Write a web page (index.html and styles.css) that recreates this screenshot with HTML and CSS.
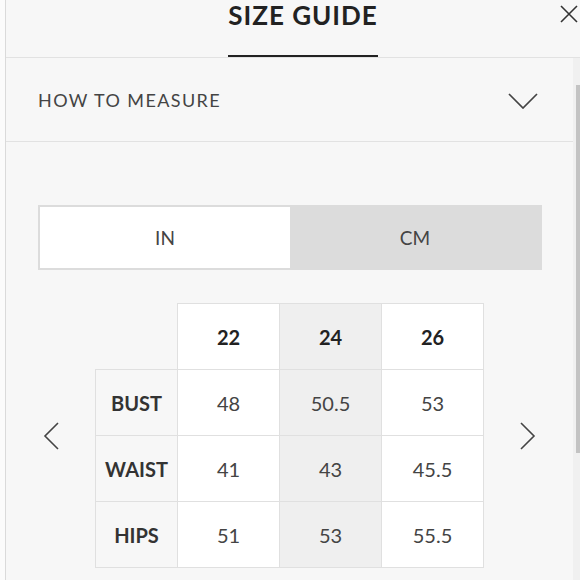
FILE: index.html
```html
<!DOCTYPE html>
<html>
<head>
<meta charset="utf-8">
<link rel="stylesheet" href="styles.css">
</head>
<body>
<div class="page">
  <div class="panel">
    <header class="head">
      <div></div>
      <h1 class="title">SIZE GUIDE</h1>
      <button class="close" aria-label="Close">
        <svg width="18" height="18" viewBox="0 0 18 18"><path d="M1 1 L17 17 M17 1 L1 17" stroke="#333" stroke-width="1.6" fill="none"/></svg>
      </button>
    </header>
    <div class="scroll">
      <div class="content">
        <div class="measure">
          <span>HOW TO MEASURE</span>
          <svg width="30" height="16" viewBox="0 0 30 16"><path d="M1 1 L15 15 L29 1" stroke="#444" stroke-width="1.7" fill="none"/></svg>
        </div>
        <div class="toggle">
          <div class="opt active">IN</div>
          <div class="opt">CM</div>
        </div>
        <div class="chart">
          <svg class="arrow" width="16" height="28" viewBox="0 0 16 28"><path d="M15 1 L2 14 L15 27" stroke="#444" stroke-width="1.6" fill="none"/></svg>
          <table class="sizes">
            <tr class="hrow"><th class="blank"></th><th>22</th><th class="alt">24</th><th>26</th></tr>
            <tr><th class="lab">BUST</th><td>48</td><td class="alt">50.5</td><td>53</td></tr>
            <tr><th class="lab">WAIST</th><td>41</td><td class="alt">43</td><td>45.5</td></tr>
            <tr><th class="lab">HIPS</th><td>51</td><td class="alt">53</td><td>55.5</td></tr>
          </table>
          <svg class="arrow" width="16" height="28" viewBox="0 0 16 28"><path d="M1 1 L14 14 L1 27" stroke="#444" stroke-width="1.6" fill="none"/></svg>
        </div>
      </div>
      <div class="bar"><div class="thumb"></div></div>
    </div>
  </div>
</div>
</body>
</html>
```
FILE: styles.css
```css
html, body {
  margin: 0;
  padding: 0;
  height: 100%;
  overflow: hidden;
}
body {
  background: #fbfbfb;
  font-family: Lato, "Open Sans", sans-serif;
}
.page {
  display: flex;
  height: 580px;
  padding-left: 5px;
}
.panel {
  flex: 1;
  display: flex;
  flex-direction: column;
  background: #f7f7f7;
  border-left: 1px solid #dadada;
}
.head {
  display: grid;
  grid-template-columns: 1fr auto 1fr;
  height: 57px;
  padding-left: 20px;
  border-bottom: 1px solid #e2e2e2;
}
.title {
  margin: 0;
  font-size: 26px;
  font-weight: 700;
  letter-spacing: 1px;
  color: #222;
  line-height: 30px;
  padding-bottom: 25px;
  border-bottom: 2px solid #222;
}
.close {
  justify-self: end;
  align-self: start;
  margin: 5px 2px 0 0;
  padding: 0;
  border: 0;
  background: none;
  width: 18px;
  height: 18px;
}
.close svg { display: block; }
.scroll {
  flex: 1;
  display: flex;
  min-height: 0;
}
.content {
  flex: 1;
}
.bar {
  width: 7px;
  background: #f0f0f0;
  padding-top: 27px;
}
.thumb {
  margin-left: 3px;
  width: 4px;
  height: 368px;
  background: #c3c3c3;
}
.measure {
  height: 83px;
  border-bottom: 1px solid #e2e2e2;
  display: flex;
  align-items: center;
  justify-content: space-between;
  padding: 0 35px 0 32px;
  font-size: 18px;
  letter-spacing: 1.4px;
  color: #444;
}
.measure svg { display: block; margin-top: 2px; }
.toggle {
  margin: 63px 31px 0 32px;
  height: 61px;
  padding: 2px;
  background: #dcdcdc;
  display: flex;
}
.opt {
  flex: 1;
  display: flex;
  align-items: center;
  justify-content: center;
  font-size: 19px;
  color: #444;
}
.opt.active { background: #fff; }
.chart {
  margin-top: 33px;
  display: flex;
  align-items: center;
  justify-content: center;
  gap: 36px;
}
.arrow { display: block; }
.sizes {
  border-collapse: collapse;
  font-size: 20px;
  table-layout: fixed;
}
.sizes th, .sizes td {
  height: 65px;
  padding: 0;
  text-align: center;
  border: 1px solid #e0e0e0;
  background: #fff;
  width: 101px;
  color: #444;
}
.sizes .alt { background: #efefef; }
.hrow th {
  font-weight: 700;
  color: #222;
}
.sizes th.blank {
  width: 81px;
  background: transparent;
  border: 0;
  border-bottom: 1px solid #e0e0e0;
}
.sizes th.lab {
  width: 81px;
  background: #f7f7f7;
  font-weight: 700;
  color: #333;
}
```
